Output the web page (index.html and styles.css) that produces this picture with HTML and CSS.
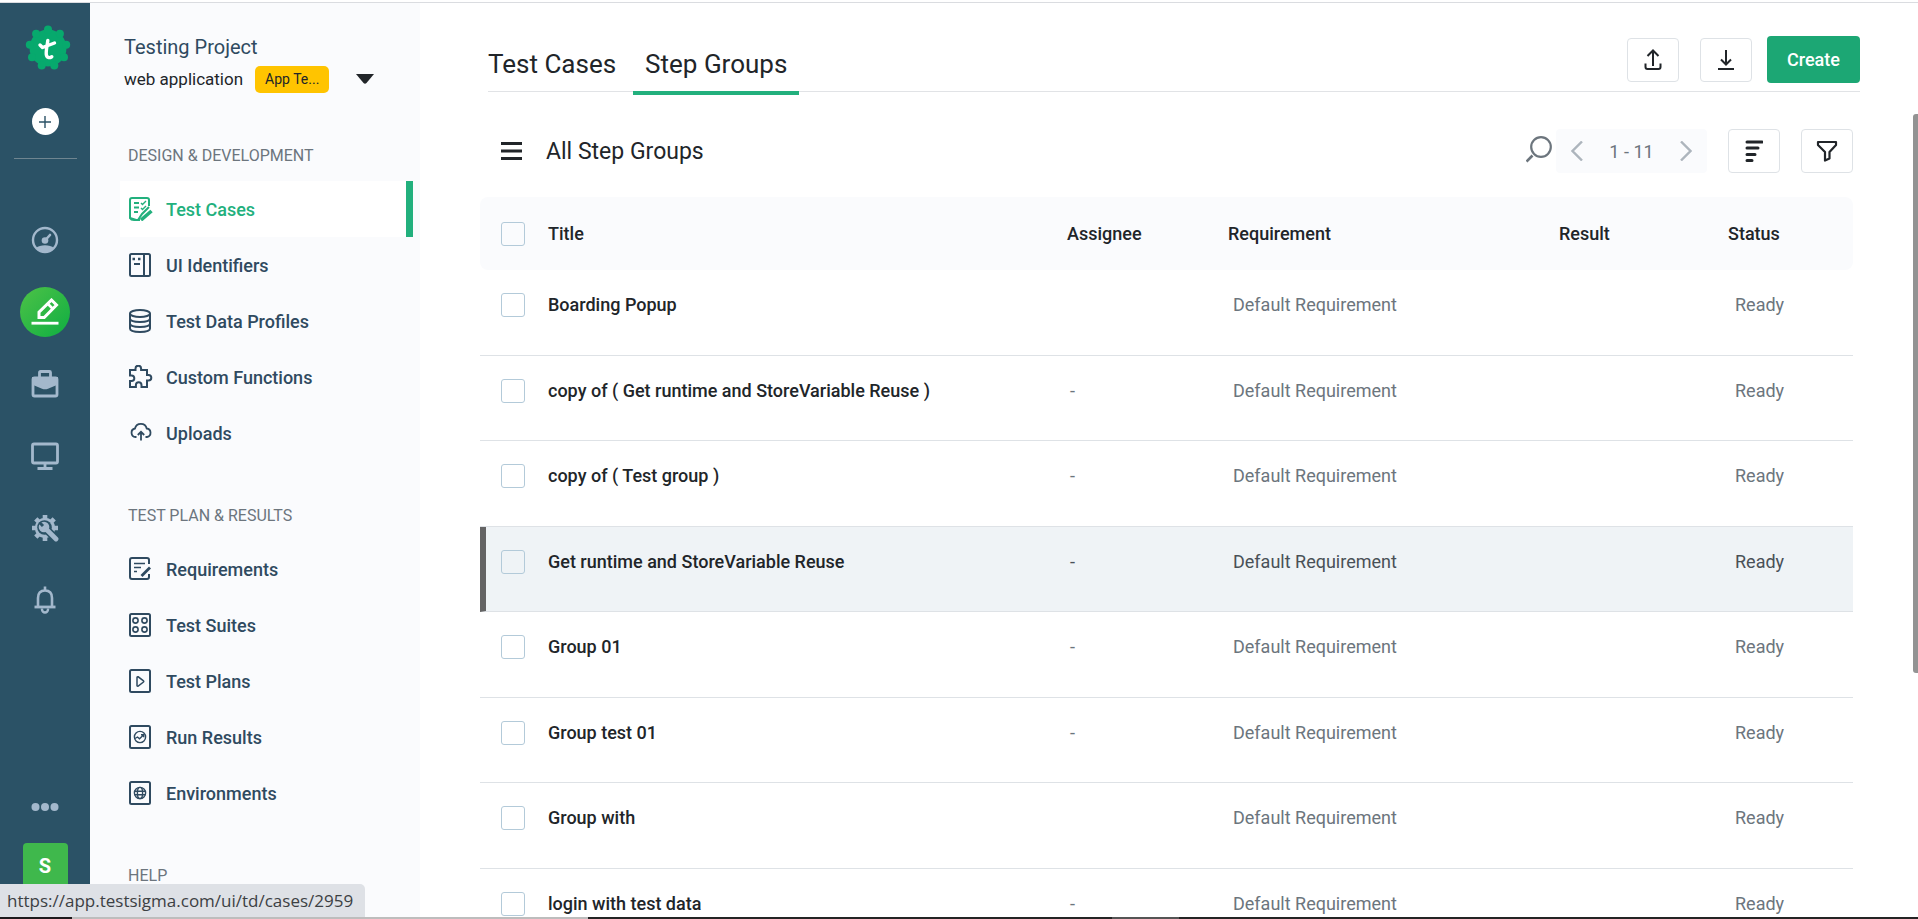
FILE: index.html
```html
<!DOCTYPE html>
<html lang="en">
<head>
<meta charset="utf-8">
<title>Step Groups</title>
<link rel="stylesheet" href="styles.css">
</head>
<body>
<div class="app">
  <nav class="rail" aria-label="Main">
    <a class="logo" href="#" aria-label="Home">
      <svg width="46" height="46" viewBox="0 0 46 46">
        <g fill="#07a96d"><circle cx="23" cy="23" r="18.500"/>
          <circle cx="23" cy="4.500" r="4"/><circle cx="34.900" cy="8.800" r="4"/><circle cx="41.200" cy="19.800" r="4"/><circle cx="39" cy="32.200" r="4"/><circle cx="29.300" cy="40.400" r="4"/><circle cx="16.700" cy="40.400" r="4"/><circle cx="7" cy="32.200" r="4"/><circle cx="4.800" cy="19.800" r="4"/><circle cx="11.100" cy="8.800" r="4"/></g>
        <path d="M15 20l2.500 2.500L29.500 18M22.800 15.500c-.5 5-2 10-1.500 14 .4 3.400 3 3.800 5.500 2.200" fill="none" stroke="#fff" stroke-width="3.400" stroke-linecap="round" stroke-linejoin="round"/>
      </svg>
    </a>
    <button class="add" type="button" aria-label="Add"><svg width="12" height="12" viewBox="0 0 12 12"><path d="M6 0v12M0 6h12" stroke="#2b5266" stroke-width="1.400"/></svg></button>
    <hr class="rail-rule">
    <div class="rail-items">
      <a class="rail-item" href="#" aria-label="Dashboard"><svg width="28" height="28" viewBox="0 0 28 28"><circle cx="14" cy="14" r="12" fill="none" stroke="#a3b8cc" stroke-width="2.400"/><path d="M5 22c4-3.600 14-3.600 18 0l-2 2.600c-4 2.600-10 2.600-14 0z" fill="#a3b8cc"/><circle cx="14" cy="14.500" r="3.300" fill="#a3b8cc"/><path d="M14 14.500l5-5.500" stroke="#a3b8cc" stroke-width="2.600" stroke-linecap="round"/></svg></a>
      <a class="rail-item" href="#" aria-label="Design"><span class="rail-active"><svg width="28" height="28" viewBox="0 0 28 28"><path d="M8 19.500v-5.300L20.500 2l5 5-12.300 12.500z" fill="none" stroke="#fff" stroke-width="3"/><path d="M16.500 5.500l5.500 5.500" stroke="#fff" stroke-width="2.600"/><path d="M.500 25.200h27" stroke="#fff" stroke-width="2.800"/></svg></span></a>
      <a class="rail-item" href="#" aria-label="Test plans"><svg width="28" height="28" viewBox="0 0 28 28"><path d="M8.500 7V2.500q0-1 1-1h9q1 0 1 1V7" fill="none" stroke="#a3b8cc" stroke-width="2.800"/><rect x="2" y="8" width="24" height="18" rx="1.500" fill="none" stroke="#a3b8cc" stroke-width="2.800"/><path d="M1 7h26v7.500l-10 4.300q-3 1-6 0L1 14.500z" fill="#a3b8cc"/></svg></a>
      <a class="rail-item" href="#" aria-label="Devices"><svg width="28" height="28" viewBox="0 0 28 28"><rect x="1.500" y="2" width="25" height="19" rx="1.500" fill="none" stroke="#a3b8cc" stroke-width="2.800"/><path d="M14 21v5M6.500 26.500h15" stroke="#a3b8cc" stroke-width="2.800"/></svg></a>
      <a class="rail-item" href="#" aria-label="Settings"><svg width="28" height="28" viewBox="0 0 28 28"><g stroke="#a3b8cc" stroke-width="4.600"><path d="M14 1v26M1 14h26M4.800 4.800l18.400 18.400M4.800 23.200L23.200 4.800"/></g><circle cx="14" cy="14" r="10.200" fill="#a3b8cc"/><circle cx="13.500" cy="13.500" r="7.300" fill="#2b5266"/><path d="M14 14l12 12" stroke="#2b5266" stroke-width="8"/><circle cx="13" cy="13" r="5.300" fill="#a3b8cc"/><path d="M14 14l11 11" stroke="#a3b8cc" stroke-width="4.800" stroke-linecap="round"/><path d="M7.500 9.500L9.500 7.500l3.600 3.400-2.200 2.200z" fill="#2b5266"/></svg></a>
      <a class="rail-item" href="#" aria-label="Notifications"><svg width="28" height="28" viewBox="0 0 28 28"><path d="M14 .5v4M7 21V12q0-7.500 7-7.500t7 7.500v9" fill="none" stroke="#a3b8cc" stroke-width="2.600"/><path d="M3.500 21h21" stroke="#a3b8cc" stroke-width="2.800"/><path d="M11 22.500v1a3 3 0 0 0 6 0v-1" fill="none" stroke="#a3b8cc" stroke-width="2.400"/></svg></a>
    </div>
    <div class="rail-foot">
      <button class="more" type="button" aria-label="More"><svg width="28" height="8" viewBox="0 0 28 8" fill="#a3b8cc"><circle cx="4.500" cy="4" r="4"/><circle cx="14" cy="4" r="4"/><circle cx="23.500" cy="4" r="4"/></svg></button>
      <button class="avatar" type="button">S</button>
    </div>
  </nav>

  <aside class="side">
    <div class="project">
      <h1 class="project-name">Testing Project</h1>
      <div class="project-row">
        <span>web application</span>
        <span class="badge">App Te...</span>
        <button class="caret" type="button" aria-label="Switch project"><svg width="18" height="10" viewBox="0 0 18 10"><path d="M0 0h18l-7.500 9q-1.500 1.500-3 0z" fill="#212529"/></svg></button>
      </div>
    </div>
    <section class="group">
      <h2 class="group-title">DESIGN &amp; DEVELOPMENT</h2>
      <a class="item item-on" href="#"><svg class="ico" viewBox="0 0 24 24"><path d="M11 23l-3 .1L1 21V3q0-2 2-2h15q2 0 2 2v6M1 21q1 2 4 2h4l4-6 7-7M5 6h5M5 10.500h5M5 15h4"/><path d="M12 6l1.500 1.500L17 4M12 11l1.500 1.500L17 9" stroke-width="1.400"/><path d="M12 23l10.500-9" stroke-width="3.600"/></svg>Test Cases</a>
      <a class="item" href="#"><svg class="ico" viewBox="0 0 24 24"><rect x="1" y="1" width="20" height="22" rx="1.500"/><path d="M15 1v22M5 11h6"/><path d="M3.500 6h2.500M9 6h2.500" stroke-width="2.400"/></svg>UI Identifiers</a>
      <a class="item" href="#"><svg class="ico" viewBox="0 0 24 24"><ellipse cx="11" cy="4.500" rx="10" ry="3.500"/><path d="M1 4.500v15c0 4.600 20 4.600 20 0v-15M1 9.500c0 4.600 20 4.600 20 0M1 14.500c0 4.600 20 4.600 20 0"/></svg>Test Data Profiles</a>
      <a class="item" href="#"><svg class="ico" viewBox="0 0 24 24"><path d="M1 5h5.500V3.500a2.800 2.800 0 0 1 5.600 0V5H18v5h1.500a2.800 2.800 0 0 1 0 5.600H18V22h-5.500v-2a2.800 2.800 0 0 0-5.600 0v2H1v-6h1.500a2.800 2.800 0 0 0 0-5.600H1z"/></svg>Custom Functions</a>
      <a class="item" href="#"><svg class="ico" viewBox="0 0 24 24"><path d="M7.500 16H6.500a4.300 4.300 0 0 1-.5-8.500 6 6 0 0 1 11.700 0A4.300 4.300 0 0 1 18 16h-1.500M12 19.500V11M8.800 14l3.200-3.200 3.200 3.200" stroke-width="1.800"/></svg>Uploads</a>
    </section>
    <section class="group">
      <h2 class="group-title">TEST PLAN &amp; RESULTS</h2>
      <a class="item" href="#"><svg class="ico" viewBox="0 0 24 24"><path d="M20 7V3q0-2-2-2H3Q1 1 1 3v17q0 2 2 2h15q2 0 2-2v-3"/><path d="M5 6.500h11M5 10.500h7M5 14.500h3" stroke-width="1.600"/><path d="M12.500 19l8.500-8.500" stroke-width="2.800"/></svg>Requirements</a>
      <a class="item" href="#"><svg class="ico" viewBox="0 0 24 24"><rect x="1" y="1" width="20" height="22" rx="1.500"/><g stroke-width="1.600"><circle cx="6.500" cy="7.500" r="2.600"/><circle cx="15.500" cy="7.500" r="2.600"/><circle cx="6.500" cy="16.500" r="2.600"/><circle cx="15.500" cy="16.500" r="2.600"/></g></svg>Test Suites</a>
      <a class="item" href="#"><svg class="ico" viewBox="0 0 24 24"><rect x="1" y="1" width="20" height="22" rx="1.500"/><path d="M8 8.500v8q.2 1 1.200.6l5.300-4.100q.6-.6 0-1.200L9.200 7.800Q8 7.500 8 8.500z" stroke-width="1.500"/></svg>Test Plans</a>
      <a class="item" href="#"><svg class="ico" viewBox="0 0 24 24"><rect x="1" y="1" width="20" height="22" rx="1.500"/><g stroke-width="1.400"><circle cx="11" cy="12" r="5.600"/><path d="M6 13.500l2.500-1.500 2 1.800 4-3.800M12 9.700h2.700v2.500"/></g></svg>Run Results</a>
      <a class="item" href="#"><svg class="ico" viewBox="0 0 24 24"><rect x="1" y="1" width="20" height="22" rx="1.500"/><g stroke-width="1.400"><circle cx="11" cy="12" r="5.600"/><ellipse cx="11" cy="12" rx="2.600" ry="5.600"/><path d="M5.500 10.300h11M5.500 13.700h11"/></g></svg>Environments</a>
    </section>
    <section class="group">
      <h2 class="group-title">HELP</h2>
    </section>
  </aside>

  <main class="main">
    <header class="head">
      <nav class="tabs" aria-label="Views">
        <a class="tab" href="#">Test Cases</a>
        <a class="tab tab-on" href="#">Step Groups</a>
      </nav>
      <div class="actions">
        <button class="sq" type="button" aria-label="Export"><svg width="18" height="22" viewBox="0 0 18 22"><path d="M9 17V2M3.500 7L9 1.500 14.500 7M1.500 14.500v3.500q0 2 2 2h11q2 0 2-2v-3.500" fill="none" stroke="#212529" stroke-width="2"/></svg></button>
        <button class="sq" type="button" aria-label="Import"><svg width="18" height="22" viewBox="0 0 18 22"><path d="M9 1v14M4 10.500l5 5 5-5M1 20h16" fill="none" stroke="#212529" stroke-width="2"/></svg></button>
        <button class="create" type="button">Create</button>
      </div>
    </header>

    <div class="bar">
      <button class="plain" type="button" aria-label="Menu"><svg width="21" height="18" viewBox="0 0 21 18"><path d="M0 1.500h21M0 9h21M0 16.500h21" stroke="#212529" stroke-width="2.800"/></svg></button>
      <h2 class="bar-title">All Step Groups</h2>
      <button class="plain search" type="button" aria-label="Search"><svg width="26" height="27" viewBox="0 0 26 27"><circle cx="15" cy="11" r="9.800" fill="none" stroke="#6c757d" stroke-width="2.200"/><path d="M6.500 19.500l-6 6" stroke="#6c757d" stroke-width="2.600"/></svg></button>
      <div class="pager">
        <button class="plain" type="button" aria-label="Previous"><svg width="12" height="20" viewBox="0 0 12 20"><path d="M11 .5L1.500 10l9.500 9.500" fill="none" stroke="#adb5bd" stroke-width="2.400"/></svg></button>
        <span>1 - 11</span>
        <button class="plain" type="button" aria-label="Next"><svg width="12" height="20" viewBox="0 0 12 20"><path d="M1 .5L10.500 10 1 19.500" fill="none" stroke="#adb5bd" stroke-width="2.400"/></svg></button>
      </div>
      <button class="sq" type="button" aria-label="Sort"><svg width="18" height="22" viewBox="0 0 18 22"><path d="M2 2h15M2 8h11M2 14.500h8M2 20.500h5" stroke="#212529" stroke-width="3" stroke-linecap="round"/></svg></button>
      <button class="sq" type="button" aria-label="Filter"><svg width="22" height="22" viewBox="0 0 22 22"><path d="M2 2h18v3l-6.500 7v6.500L9 20.500V12L2 5z" fill="none" stroke="#212529" stroke-width="2.200" stroke-linejoin="round"/></svg></button>
    </div>

    <table class="grid">
      <colgroup><col class="c-check"><col><col class="c-assignee"><col class="c-req"><col class="c-result"><col class="c-status"></colgroup>
      <thead>
        <tr><th><input type="checkbox" aria-label="Select all"></th><th>Title</th><th>Assignee</th><th>Requirement</th><th>Result</th><th>Status</th></tr>
      </thead>
      <tbody>
        <tr><td><input type="checkbox" id="r1"></td><td><label for="r1">Boarding Popup</label></td><td></td><td>Default Requirement</td><td></td><td>Ready</td></tr>
        <tr><td><input type="checkbox" id="r2"></td><td><label for="r2">copy of ( Get runtime and StoreVariable Reuse )</label></td><td>-</td><td>Default Requirement</td><td></td><td>Ready</td></tr>
        <tr><td><input type="checkbox" id="r3"></td><td><label for="r3">copy of ( Test group )</label></td><td>-</td><td>Default Requirement</td><td></td><td>Ready</td></tr>
        <tr class="row-on"><td><input type="checkbox" id="r4"></td><td><label for="r4">Get runtime and StoreVariable Reuse</label></td><td>-</td><td>Default Requirement</td><td></td><td>Ready</td></tr>
        <tr><td><input type="checkbox" id="r5"></td><td><label for="r5">Group 01</label></td><td>-</td><td>Default Requirement</td><td></td><td>Ready</td></tr>
        <tr><td><input type="checkbox" id="r6"></td><td><label for="r6">Group test 01</label></td><td>-</td><td>Default Requirement</td><td></td><td>Ready</td></tr>
        <tr><td><input type="checkbox" id="r7"></td><td><label for="r7">Group with</label></td><td></td><td>Default Requirement</td><td></td><td>Ready</td></tr>
        <tr><td><input type="checkbox" id="r8"></td><td><label for="r8">login with test data</label></td><td>-</td><td>Default Requirement</td><td></td><td>Ready</td></tr>
      </tbody>
    </table>
  </main>
</div>
<div class="scroll-thumb"></div>
<div class="status">https://app.testsigma.com/ui/td/cases/2959</div>
<div class="edge"></div>
</body>
</html>
```

FILE: styles.css
```css
* { box-sizing: border-box; }

body {
  margin: 0;
  height: 100vh;
  padding-top: 2px;
  overflow: hidden;
  background: #fff;
  color: #212529;
  font-family: Roboto, "Liberation Sans", sans-serif;
  font-size: 18px;
}

h1, h2 { margin: 0; font-weight: 400; }
a { color: inherit; text-decoration: none; }
button { font: inherit; color: inherit; padding: 0; border: 0; background: none; cursor: pointer; }
svg { display: block; flex: none; }

.app {
  display: flex;
  height: 100%;
  border-top: 1px solid #dadce0;
}

/* Icon rail */
.rail {
  flex: none;
  display: flex;
  flex-direction: column;
  align-items: center;
  width: 90px;
  padding-top: 22px;
  background: #2b5266;
}
.logo { margin-left: 5px; }
.add {
  display: grid;
  place-items: center;
  width: 27px;
  height: 27px;
  margin-top: 37px;
  border-radius: 50%;
  background: #fff;
}
.rail-rule {
  width: 63px;
  height: 1px;
  margin: 23px 0 0;
  border: 0;
  background: #6f8590;
}
.rail-items { margin-top: 45px; }
.rail-item {
  display: grid;
  place-items: center;
  width: 90px;
  height: 72px;
}
.rail-active {
  display: grid;
  place-items: center;
  width: 50px;
  height: 50px;
  border-radius: 50%;
  background: linear-gradient(135deg, #4dc247, #0fae42);
}
.rail-foot {
  display: flex;
  flex-direction: column;
  align-items: center;
  gap: 32px;
  margin-top: auto;
  padding-bottom: 31px;
}
.avatar {
  width: 45px;
  height: 45px;
  border-radius: 4px;
  background: #3fb84c;
  color: #fff;
  font-size: 20px;
  font-weight: 700;
}

/* Side menu */
.side {
  flex: none;
  width: 330px;
  padding: 28px 7px 0 30px;
  overflow: hidden;
  background: #fafbfd;
}
.project {
  padding-left: 4px;
  margin-bottom: 50px;
}
.project-name {
  color: #2f4a60;
  font-size: 20px;
  line-height: 32px;
}
.project-row {
  display: flex;
  align-items: center;
  height: 30px;
  margin-top: 1px;
  font-size: 17px;
}
.badge {
  margin-left: 12px;
  padding: 0 10px;
  border-radius: 5px;
  background: #ffc400;
  font-size: 14px;
  line-height: 27px;
}
.caret { margin-left: 27px; }
.group { margin-bottom: 43px; }
.group-title {
  padding-left: 8px;
  margin-bottom: 13px;
  color: #6c757d;
  font-size: 16px;
  line-height: 24px;
}
.item {
  display: flex;
  align-items: center;
  gap: 13px;
  height: 56px;
  padding-left: 9px;
  color: #2f4a60;
  font-weight: 500;
}
.item-on {
  border-right: 7px solid #22b07d;
  background: #fff;
  color: #22b07d;
}
.ico {
  width: 24px;
  height: 24px;
  fill: none;
  stroke: currentColor;
  stroke-width: 2;
}

/* Main area */
.main {
  flex: 1;
  min-width: 0;
  padding: 0 65px 0 60px;
  overflow: hidden;
}
.head {
  display: flex;
  justify-content: space-between;
  align-items: flex-end;
  height: 89px;
  margin: 0 -7px 0 8px;
  border-bottom: 1px solid #e1e3e6;
}
.tabs {
  display: flex;
  gap: 17px;
  height: 56px;
}
.tab {
  height: 60px;
  font-size: 26px;
  line-height: 58px;
}
.tab-on {
  padding: 0 12px;
  border-bottom: 4px solid #22b07d;
}
.actions {
  display: flex;
  align-items: center;
  gap: 21px;
  height: 47px;
  margin-bottom: 8px;
}
.sq {
  display: grid;
  place-items: center;
  width: 52px;
  height: 44px;
  border: 1px solid #dee2e6;
  border-radius: 4px;
  background: #fff;
}
.create {
  width: 93px;
  height: 47px;
  margin-left: -6px;
  border-radius: 4px;
  background: #1ca774;
  color: #fff;
  font-weight: 500;
}
.bar {
  display: flex;
  align-items: center;
  height: 44px;
  margin: 37px 0 24px;
  padding-left: 21px;
}
.plain { flex: none; }
.bar-title {
  flex: 1;
  margin-left: 24px;
  font-size: 23px;
}
.search { margin-bottom: 4px; }
.pager {
  display: flex;
  align-items: center;
  justify-content: space-between;
  width: 151px;
  height: 44px;
  margin-left: 4px;
  padding: 0 15px;
  border-radius: 4px;
  background: #fafbfd;
  color: #6c757d;
}
.bar .sq { margin-left: 21px; }

.grid {
  width: 100%;
  table-layout: fixed;
  border-collapse: separate;
  border-spacing: 0;
}
.c-check { width: 68px; }
.c-assignee { width: 161px; }
.c-req { width: 331px; }
.c-result { width: 169px; }
.c-status { width: 125px; }
.grid th {
  height: 73px;
  padding: 0;
  background: #fafbfd;
  font-weight: 500;
  text-align: left;
}
.grid th:first-child { border-radius: 8px 0 0 8px; }
.grid th:last-child { border-radius: 0 8px 8px 0; }
.grid td {
  height: 86px;
  padding: 23px 0 0 5px;
  border-bottom: 1px solid #dee2e6;
  color: #6c757d;
  line-height: 24px;
  vertical-align: top;
}
.grid tr:nth-child(even) td { height: 85px; }
.grid th:first-child { padding-left: 21px; }
.grid td:first-child { padding-left: 21px; }
.grid td:nth-child(3) { padding-left: 3px; }
.grid td:last-child { padding-left: 7px; }
.grid .row-on td { background: #eff3f6; color: #495057; }
.grid .row-on td:first-child { padding-left: 15px; border-left: 6px solid #646464; }
.grid tr td:nth-child(2) { padding-left: 0; color: #212529; font-weight: 500; }
.grid input {
  appearance: none;
  display: block;
  width: 24px;
  height: 24px;
  margin: 0;
  border: 1px solid #b3cad9;
  border-radius: 3px;
}

/* Window chrome */
.scroll-thumb {
  position: absolute;
  top: 114px;
  right: 0;
  width: 5px;
  height: 559px;
  border-radius: 3px 0 0 3px;
  background: #939393;
}
.status {
  position: absolute;
  left: 0;
  bottom: 2px;
  padding: 0 12px 0 7px;
  border-top-right-radius: 5px;
  background: #dee1e6;
  color: #3c4043;
  font-family: "Open Sans", sans-serif;
  font-size: 17px;
  line-height: 33px;
}
.edge {
  position: absolute;
  left: 0;
  right: 0;
  bottom: 0;
  height: 2px;
  background: linear-gradient(90deg, #1d1a1c 72px, #bdbdbd 72px, #bdbdbd 588px, #242424 588px, #242424 1112px, #555 1112px, #555 1179px, #242424 1179px);
}
```
